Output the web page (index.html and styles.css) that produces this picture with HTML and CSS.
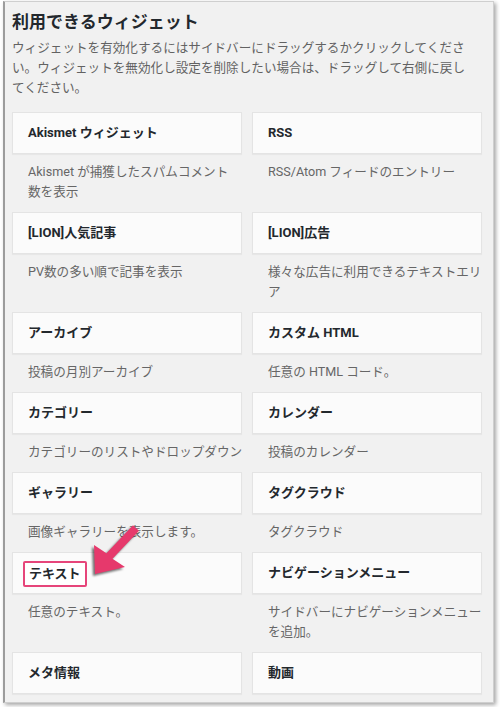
FILE: index.html
```html
<!DOCTYPE html>
<html lang="ja">
<head>
<meta charset="utf-8">
<link rel="stylesheet" href="styles.css">
</head>
<body>
<div class="panel">
  <h2 class="heading">利用できるウィジェット</h2>
  <p class="intro">
    <span class="line">ウィジェットを有効化するにはサイドバーにドラッグするかクリックしてくださ</span>
    <span class="line">い。ウィジェットを無効化し設定を削除したい場合は、ドラッグして右側に戻し</span>
    <span class="line">てください。</span>
  </p>
  <div class="grid">
    <div class="widget"><div class="card">Akismet ウィジェット</div><div class="desc">Akismet が捕獲したスパムコメント<br>数を表示</div></div>
    <div class="widget"><div class="card">RSS</div><div class="desc">RSS/Atom フィードのエントリー</div></div>
    <div class="widget"><div class="card">[LION]人気記事</div><div class="desc">PV数の多い順で記事を表示</div></div>
    <div class="widget"><div class="card">[LION]広告</div><div class="desc">様々な広告に利用できるテキストエリ<br>ア</div></div>
    <div class="widget"><div class="card">アーカイブ</div><div class="desc">投稿の月別アーカイブ</div></div>
    <div class="widget"><div class="card">カスタム HTML</div><div class="desc">任意の HTML コード。</div></div>
    <div class="widget"><div class="card">カテゴリー</div><div class="desc">カテゴリーのリストやドロップダウン</div></div>
    <div class="widget"><div class="card">カレンダー</div><div class="desc">投稿のカレンダー</div></div>
    <div class="widget"><div class="card">ギャラリー</div><div class="desc">画像ギャラリーを表示します。</div></div>
    <div class="widget"><div class="card">タグクラウド</div><div class="desc">タグクラウド</div></div>
    <div class="widget"><div class="card"><span class="mark">テキスト</span></div><div class="desc">任意のテキスト。</div></div>
    <div class="widget"><div class="card">ナビゲーションメニュー</div><div class="desc">サイドバーにナビゲーションメニュー<br>を追加。</div></div>
    <div class="widget"><div class="card">メタ情報</div></div>
    <div class="widget"><div class="card">動画</div></div>
  </div>
</div>
<svg class="arrow" width="500" height="707" viewBox="0 0 500 707" xmlns="http://www.w3.org/2000/svg">
  <polygon points="95,574 94,545 106.5,553.3 133,525.3 139,530.7 112.5,558.7 125,567" fill="#e6396c"/>
</svg>
</body>
</html>
```
FILE: styles.css
```css
html, body {
  margin: 0;
  padding: 0;
}
body {
  background: #fff;
  position: relative;
  width: 500px;
  height: 707px;
  overflow: hidden;
  font-family: Roboto, "Noto Sans CJK JP", sans-serif;
}
.panel {
  box-sizing: border-box;
  width: 491px;
  height: 702px;
  margin: 1px 0 0 3px;
  background: #f1f1f1;
  border: 1px solid #cfcfcf;
  border-left: 2px solid #9c9c9c;
  box-shadow: 2px 2px 4px rgba(0, 0, 0, 0.35);
  padding: 0 11px 0 7px;
}
.heading {
  margin: 8px 0 0 0;
  font-size: 17px;
  line-height: 24px;
  font-weight: 700;
  color: #23282d;
}
.intro {
  margin: 4px 0 0 0;
  font-size: 12.6px;
  line-height: 20px;
  color: #626262;
}
.line {
  display: block;
  white-space: nowrap;
}
.grid {
  margin-top: 14px;
  display: grid;
  grid-template-columns: 230px 230px;
  column-gap: 10px;
}
.card {
  box-sizing: border-box;
  height: 42px;
  background: #fbfbfb;
  border: 1px solid #e4e4e4;
  box-shadow: 0 1px 1px rgba(0, 0, 0, 0.04);
  padding: 0 15px;
  font-size: 13px;
  line-height: 40px;
  font-weight: 700;
  color: #23282d;
  white-space: nowrap;
}
.desc {
  padding: 8px 16px 10px 16px;
  font-size: 12.6px;
  line-height: 20px;
  color: #666;
  white-space: nowrap;
}
.mark {
  display: inline-block;
  margin-left: -5px;
  padding: 0 4px;
  height: 22px;
  line-height: 22px;
  border: 2px solid #e6457a;
  border-radius: 2px;
  background: #fff;
  vertical-align: middle;
}
.arrow {
  position: absolute;
  left: 0;
  top: 0;
  pointer-events: none;
  filter: drop-shadow(-2px 2px 1px rgba(0, 0, 0, 0.55));
}
```
